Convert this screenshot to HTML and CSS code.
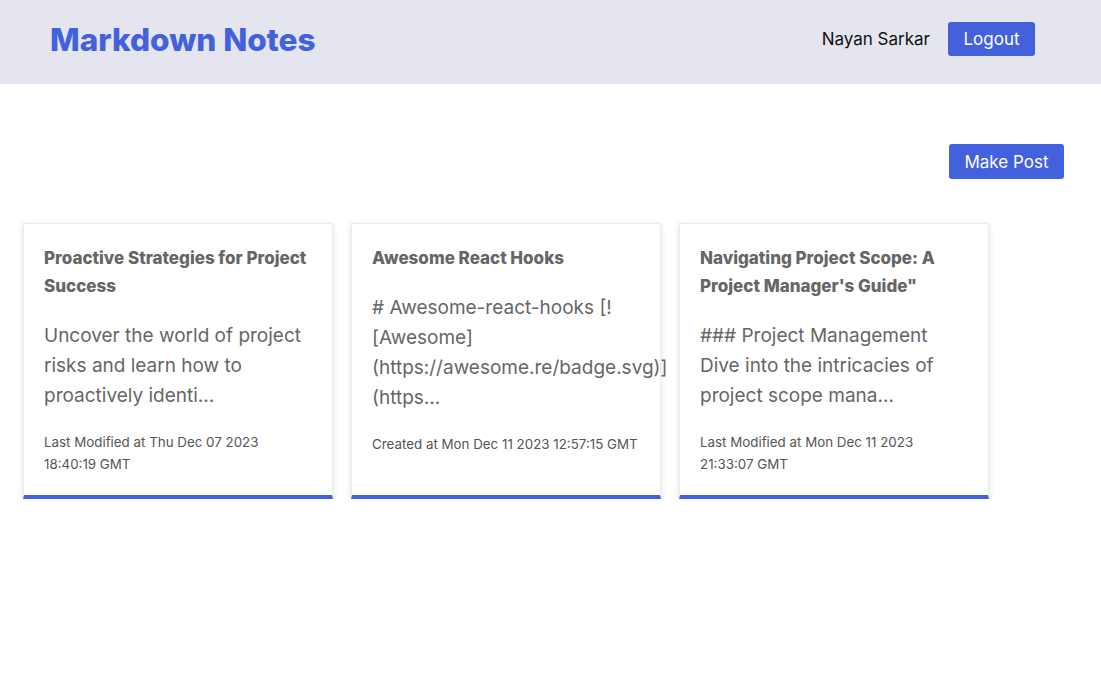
FILE: index.html
```html
<!DOCTYPE html>
<html lang="en">
<head>
<meta charset="utf-8">
<title>Markdown Notes</title>
<link rel="stylesheet" href="styles.css">
</head>
<body>
<header class="topbar">
  <h1 class="brand">Markdown Notes</h1>
  <div class="user">
    <span class="user-name">Nayan Sarkar</span>
    <button class="btn btn-logout">Logout</button>
  </div>
</header>
<main class="content">
  <div class="actions">
    <button class="btn btn-make">Make Post</button>
  </div>
  <section class="cards">
    <article class="card">
      <h2 class="card-title">Proactive Strategies for Project Success</h2>
      <p class="card-body">Uncover the world of project risks and learn how to proactively identi...</p>
      <p class="card-date">Last Modified at Thu Dec 07 2023 18:40:19 GMT</p>
    </article>
    <article class="card">
      <h2 class="card-title">Awesome React Hooks</h2>
      <p class="card-body"># Awesome-react-hooks [![Awesome](https://awesome.re/badge.svg)](https...</p>
      <p class="card-date">Created at Mon Dec 11 2023 12:57:15 GMT</p>
    </article>
    <article class="card">
      <h2 class="card-title">Navigating Project Scope: A Project Manager's Guide"</h2>
      <p class="card-body">### Project Management Dive into the intricacies of project scope mana...</p>
      <p class="card-date">Last Modified at Mon Dec 11 2023 21:33:07 GMT</p>
    </article>
  </section>
</main>
</body>
</html>
```

FILE: styles.css
```css
* { box-sizing: border-box; }
body {
  margin: 0;
  font-family: Inter, "Open Sans", sans-serif;
  background: #ffffff;
}
.topbar {
  height: 84px;
  background: #e5e5ef;
  display: flex;
  align-items: center;
  justify-content: space-between;
  padding: 0 66px 6px 50px;
}
.brand {
  margin: 0;
  font-size: 31.5px;
  font-weight: 800;
  color: #4361dc;
}
.user {
  display: flex;
  align-items: center;
  gap: 18px;
}
.user-name {
  font-size: 17px;
  color: #111;
}
.btn {
  font-family: inherit;
  background: #4361dc;
  color: #fff;
  border: none;
  border-radius: 3px;
  font-size: 17px;
  cursor: pointer;
}
.btn-logout {
  width: 87px;
  height: 34px;
}
.actions {
  display: flex;
  justify-content: flex-end;
  padding: 60px 37px 0 0;
}
.btn-make {
  width: 115px;
  height: 35px;
}
.cards {
  display: flex;
  gap: 18px;
  padding: 44px 0 0 23px;
}
.card {
  width: 310px;
  border: 1px solid #ececec;
  border-bottom: 4px solid #4361dc;
  box-shadow: 0 2px 6px rgba(0,0,0,0.12);
  padding: 20px;
  background: #fff;
}
.card-title {
  margin: 0;
  font-size: 17px;
  font-weight: 800;
  line-height: 28px;
  color: #666;
}
.card-body {
  margin: 21px 0 0;
  font-size: 19px;
  line-height: 30px;
  color: #666;
}
.card-date {
  margin: 20px 0 0;
  font-size: 13.35px;
  line-height: 22px;
  color: #555;
}
```
